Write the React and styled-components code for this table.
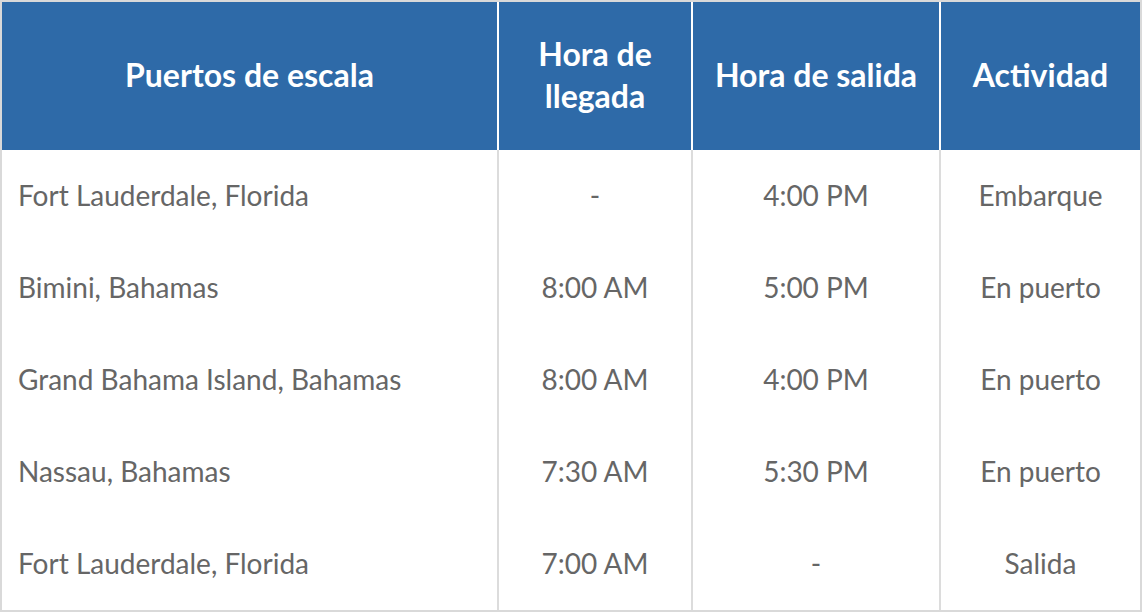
import React from "react";
import styled, { createGlobalStyle } from "styled-components";

const Global = createGlobalStyle`
  html, body { margin: 0; padding: 0; background: #fff; }
  body { font-family: Lato, "Open Sans", sans-serif; }
`;

const Table = styled.table`
  width: 1142px;
  border-collapse: separate;
  border-spacing: 0;
  border: 2px solid #d9d9d9;
  table-layout: fixed;
  box-sizing: border-box;
`;

const Col = styled.col`
  width: ${(p) => p.$w}px;
`;

const HeadCell = styled.th`
  box-sizing: border-box;
  height: 148px;
  background: #2e6aa8;
  color: #fff;
  font-family: Lato, sans-serif;
  font-weight: 700;
  font-size: 32px;
  line-height: 42px;
  text-align: center;
  vertical-align: middle;
  padding: 0 16px 3px;
  & + & { border-left: 2px solid #fff; }
`;

const Cell = styled.td`
  box-sizing: border-box;
  height: 92px;
  color: #666;
  font-family: Lato, sans-serif;
  font-size: 28px;
  font-weight: 400;
  text-align: ${(p) => (p.$left ? "left" : "center")};
  vertical-align: middle;
  padding: 0 16px 2px;
  & + & { border-left: 2px solid #dcdcdc; }
`;

const widths = [495, 194, 248, 201];
const heads = ["Puertos de escala", "Hora de llegada", "Hora de salida", "Actividad"];
const rows = [
  ["Fort Lauderdale, Florida", "-", "4:00 PM", "Embarque"],
  ["Bimini, Bahamas", "8:00 AM", "5:00 PM", "En puerto"],
  ["Grand Bahama Island, Bahamas", "8:00 AM", "4:00 PM", "En puerto"],
  ["Nassau, Bahamas", "7:30 AM", "5:30 PM", "En puerto"],
  ["Fort Lauderdale, Florida", "7:00 AM", "-", "Salida"],
];

export default function App() {
  return (
    <>
      <Global />
      <Table>
        <colgroup>
          {widths.map((w, i) => (
            <Col key={i} $w={w} />
          ))}
        </colgroup>
        <thead>
          <tr>
            {heads.map((h) => (
              <HeadCell key={h}>{h}</HeadCell>
            ))}
          </tr>
        </thead>
        <tbody>
          {rows.map((r, i) => (
            <tr key={i}>
              {r.map((c, j) => (
                <Cell key={j} $left={j === 0}>
                  {c}
                </Cell>
              ))}
            </tr>
          ))}
        </tbody>
      </Table>
    </>
  );
}
